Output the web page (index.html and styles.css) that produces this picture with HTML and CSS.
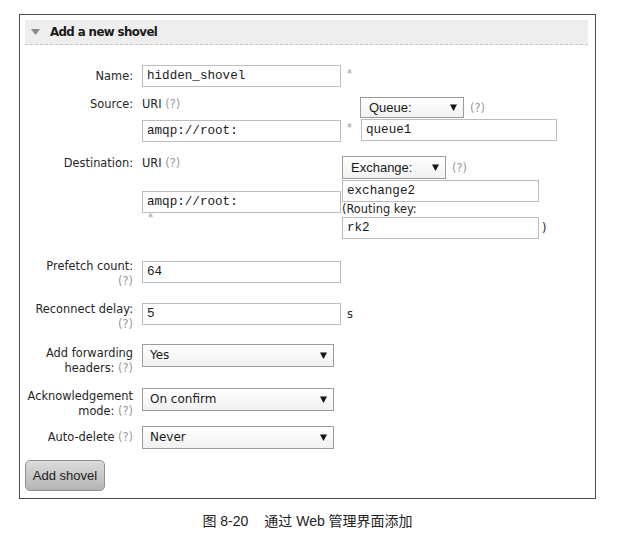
FILE: index.html
```html
<!DOCTYPE html>
<html>
<head>
<meta charset="utf-8">
<link rel="stylesheet" href="styles.css">
</head>
<body>
<div class="box">
  <div class="header">
    <svg class="tri" width="9" height="6" viewBox="0 0 9 6"><path d="M0 0H9L4.5 6Z" fill="#8a8a8a"/></svg>
    <span class="title">Add a new shovel</span>
  </div>

  <div class="row row-name">
    <div class="label">Name:</div>
    <div class="field">
      <div class="input w199">hidden_shovel</div>
      <span class="mand">*</span>
    </div>
  </div>

  <div class="row row-src">
    <div class="label">Source:</div>
    <div class="field">
      <div class="col col1">
        <div class="line">URI <span class="help">(?)</span></div>
        <div class="input w199 src-uri">amqp://root:</div>
      </div>
      <span class="mand mand-src">*</span>
      <div class="col col2">
        <div class="selrow">
          <div class="select w103"><span class="sel-text arial">Queue:</span><svg width="7" height="7" viewBox="0 0 7 7"><path d="M0 0.5H7L3.5 7Z" fill="#111"/></svg></div>
          <span class="help helpsel">(?)</span>
        </div>
        <div class="input w196">queue1</div>
      </div>
    </div>
  </div>

  <div class="row row-dst">
    <div class="label">Destination:</div>
    <div class="field">
      <div class="col col1">
        <div class="line">URI <span class="help">(?)</span></div>
        <div class="input w199 dst-uri">amqp://root:</div>
        <span class="mand mand-dst">*</span>
      </div>
      <div class="col col2b">
        <div class="selrow">
          <div class="select w104 tall"><span class="sel-text arial">Exchange:</span><svg width="7" height="7" viewBox="0 0 7 7"><path d="M0 0.5H7L3.5 7Z" fill="#111"/></svg></div>
          <span class="help helpsel">(?)</span>
        </div>
        <div class="input w197">exchange2</div>
        <div class="line rk">(Routing key:</div>
        <div class="rkrow"><div class="input w197">rk2</div><span class="paren">)</span></div>
      </div>
    </div>
  </div>

  <div class="row row-two row-prefetch">
    <div class="label">Prefetch count:<br><span class="help">(?)</span></div>
    <div class="field"><div class="input w199">64</div></div>
  </div>

  <div class="row row-two row-reconnect">
    <div class="label">Reconnect delay:<br><span class="help">(?)</span></div>
    <div class="field"><div class="input w199">5</div><span class="unit">s</span></div>
  </div>

  <div class="row row-two row-sel row-fwd">
    <div class="label">Add forwarding<br>headers: <span class="help">(?)</span></div>
    <div class="field"><div class="select w192 big"><span class="sel-text">Yes</span><svg width="7" height="7" viewBox="0 0 7 7"><path d="M0 0.5H7L3.5 7Z" fill="#111"/></svg></div></div>
  </div>

  <div class="row row-two row-sel row-ack">
    <div class="label">Acknowledgement<br>mode: <span class="help">(?)</span></div>
    <div class="field"><div class="select w192 big"><span class="sel-text">On confirm</span><svg width="7" height="7" viewBox="0 0 7 7"><path d="M0 0.5H7L3.5 7Z" fill="#111"/></svg></div></div>
  </div>

  <div class="row row-auto">
    <div class="label">Auto-delete <span class="help">(?)</span></div>
    <div class="field"><div class="select w192 big"><span class="sel-text">Never</span><svg width="7" height="7" viewBox="0 0 7 7"><path d="M0 0.5H7L3.5 7Z" fill="#111"/></svg></div></div>
  </div>

  <div class="btn">Add shovel</div>
</div>
<div class="caption">图 8-20<span class="capgap"></span>通过 Web 管理界面添加</div>
</body>
</html>
```

FILE: styles.css
```css
html, body {
  margin: 0;
  padding: 0;
  background: #ffffff;
}
body {
  width: 626px;
  height: 538px;
  overflow: hidden;
  font-family: "DejaVu Sans", Verdana, sans-serif;
  font-size: 11.4px;
  color: #262626;
}
.box {
  margin: 14px 0 0 19px;
  width: 575px;
  border: 1px solid #4a4a4a;
  padding-bottom: 7px;
}
.header {
  margin: 5px 7px 0 5px;
  height: 24px;
  background: #eeeeee;
  border-bottom: 1px dashed #c4c4c4;
  display: flex;
  align-items: center;
}
.tri {
  margin-left: 6px;
}
.title {
  margin-left: 10px;
  font-weight: bold;
  font-size: 11.8px;
  letter-spacing: -0.6px;
  color: #1a1a1a;
}
.row {
  display: flex;
  align-items: center;
}
.label {
  width: 113px;
  margin-right: 9px;
  text-align: right;
  line-height: 15px;
  flex: none;
}
.field {
  display: flex;
  align-items: flex-start;
}
.help {
  color: #9a9a9a;
}
.input {
  box-sizing: border-box;
  height: 22px;
  border: 1px solid #bdbdbd;
  background: #fff;
  font-family: "Liberation Mono", "Courier New", monospace;
  font-size: 12.6px;
  line-height: 20px;
  padding-left: 4px;
  color: #1a1a1a;
  white-space: pre;
}
.w199 { width: 199px; }
.w196 { width: 196px; }
.w197 { width: 197px; }
.mand {
  color: #9a9a9a;
  font-size: 10px;
  line-height: 12px;
  padding-left: 6px;
  width: 13px;
  box-sizing: content-box;
}
.row-name { margin-top: 20px; }
.row-name .mand { margin-top: 3px; }

.row-src {
  margin-top: 10px;
  align-items: flex-start;
}
.col { display: flex; flex-direction: column; }
.line { line-height: 15px; height: 15px; }
.src-uri { margin-top: 8px; }
.mand-src { margin-top: 25px; }
.col2 .input { margin-top: 1px; margin-left: 1px; }
.selrow { display: flex; align-items: center; }
.select {
  box-sizing: border-box;
  height: 21px;
  border: 1px solid #9c9c9c;
  background: linear-gradient(#ffffff, #f1f1f1);
  display: flex;
  align-items: center;
  justify-content: space-between;
  padding: 0 6px 0 8px;
  color: #1a1a1a;
}
.select.tall { height: 23px; }
.select.big { height: 23px; padding-left: 7px; }
.w103 { width: 104px; }
.w104 { width: 104px; }
.w192 { width: 192px; }
.arial {
  font-family: "Liberation Sans", Arial, sans-serif;
  font-size: 13px;
}
.sel-text { line-height: 15px; }
.big .sel-text { font-size: 12px; }
.helpsel { margin-left: 6px; }

.row-dst {
  margin-top: 14px;
  align-items: flex-start;
}
.dst-uri { margin-top: 20px; }
.mand-dst { padding-left: 6px; margin-top: 1px; line-height: 8px; }
.col2b { margin-left: 1px; }
.col2b .input { margin-top: 1px; }
.rk { height: 14px; line-height: 14px; }
.rkrow { display: flex; align-items: center; }
.rkrow .input { margin-top: 1px; }
.paren { margin-left: 3px; }

.row-two {
  align-items: flex-start;
  height: 22px;
}
.row-two.row-sel { height: 23px; }
.row-prefetch { margin-top: 22px; }
.row-prefetch .label { margin-top: -2px; }
.row-reconnect { margin-top: 20px; }
.row-reconnect .label { margin-top: -1px; }
.unit { margin-left: 6px; line-height: 22px; }
.row-fwd { margin-top: 19px; }
.row-fwd .label { margin-top: 2px; }
.row-ack { margin-top: 21px; }
.row-ack .label { margin-top: 1px; }
.row-auto { margin-top: 15px; }

.btn {
  margin: 11px 0 0 5px;
  width: 80px;
  height: 31px;
  box-sizing: border-box;
  border: 1px solid #8e8e8e;
  border-radius: 5px;
  background: linear-gradient(#dcdcdc, #b4b4b4);
  display: flex;
  align-items: center;
  justify-content: center;
  font-family: "Liberation Sans", Arial, sans-serif;
  font-size: 13px;
  color: #222;
}
.caption {
  margin-left: 19px;
  width: 577px;
  margin-top: 13px;
  text-align: center;
  font-family: "Liberation Sans", "Noto Sans CJK SC", sans-serif;
  font-size: 14px;
  color: #222;
  line-height: 18px;
}
.capgap {
  display: inline-block;
  width: 16px;
}
```
